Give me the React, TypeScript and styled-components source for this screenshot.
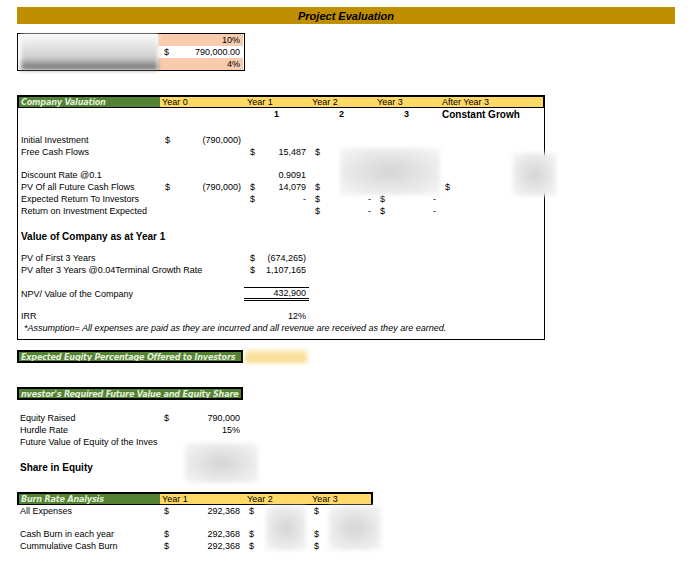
import React from 'react';
import styled, { createGlobalStyle } from 'styled-components';

const Global = createGlobalStyle`
  body { margin: 0; background: #fff; font-family: "Liberation Sans", Arial, sans-serif; font-size: 9px; color: #000; }
`;

const Page = styled.div`
  width: 691px;
  height: 562px;
  padding: 7px 16px 0 17px;
  box-sizing: border-box;
  display: flex;
  flex-direction: column;
`;

const TitleBar = styled.div`
  height: 17px;
  background: #bf8f00;
  display: flex;
  align-items: center;
  justify-content: center;
  font-weight: bold;
  font-style: italic;
  font-size: 11px;
`;

const Gap = styled.div<{ $h: number }>`
  height: ${p => p.$h}px;
  flex-shrink: 0;
`;

const COLS = '141px 85px 65px 65px 65px 107px';

const Row = styled.div<{ $h?: number }>`
  display: grid;
  grid-template-columns: ${COLS};
  height: ${p => p.$h ?? 12}px;
  align-items: center;
  white-space: nowrap;
`;

const Cell = styled.div<{ $align?: string; $bold?: boolean; $bg?: string }>`
  display: flex;
  justify-content: ${p => p.$align ?? 'flex-start'};
  align-items: center;
  height: 100%;
  padding: 0 3px;
  font-weight: ${p => (p.$bold ? 'bold' : 'normal')};
  background: ${p => p.$bg ?? 'transparent'};
  overflow: visible;
  box-sizing: border-box;
`;

const Money = styled.div<{ $lines?: boolean }>`
  display: flex;
  justify-content: space-between;
  align-items: center;
  height: 100%;
  padding: 0 3px 0 6px;
  box-sizing: border-box;
  border-top: ${p => (p.$lines ? '1px solid #000' : 'none')};
  border-bottom: ${p => (p.$lines ? '3px double #000' : 'none')};
`;

const Box = styled.div<{ $w: number }>`
  width: ${p => p.$w}px;
  border: 1px solid #000;
  box-sizing: border-box;
`;

const InputBox = styled.div`
  width: 226px;
  border: 1px solid #000;
  display: grid;
  grid-template-columns: 140px 85px;
`;

const Blur = styled.div<{ $w: number; $h: number; $c?: string }>`
  width: ${p => p.$w}px;
  height: ${p => p.$h}px;
  background: ${p => p.$c ?? 'radial-gradient(ellipse at center, #d4d4d4 0%, #e8e8e8 55%, #f6f6f6 100%)'};
  filter: blur(2px);
`;

const Header = styled.div<{ $cols: string; $w: number }>`
  display: grid;
  grid-template-columns: ${p => p.$cols};
  width: ${p => p.$w}px;
  height: 13px;
  border: 2px solid #000;
  box-sizing: border-box;
  align-items: center;
`;

const GreenLabel = styled.div`
  background: #548235;
  color: #e2efda;
  font-family: "DejaVu Sans Condensed", "Liberation Sans Narrow", "Liberation Sans", sans-serif;
  font-weight: bold;
  font-style: italic;
  font-size: 9px;
  letter-spacing: -0.2px;
  height: 100%;
  display: flex;
  align-items: center;
  padding-left: 2px;
  overflow: hidden;
  white-space: nowrap;
`;

const YellowCell = styled.div`
  background: #ffd966;
  height: 100%;
  display: flex;
  align-items: center;
  padding-left: 2px;
`;

const Line = styled.div`
  display: flex;
  align-items: center;
  gap: 2px;
`;

const Italic = styled.div`
  font-style: italic;
  padding-left: 6px;
  height: 12px;
  line-height: 12px;
  white-space: nowrap;
`;

const Overlay = styled.div<{ $x: number; $y: number }>`
  position: absolute;
  left: ${p => p.$x}px;
  top: ${p => p.$y}px;
`;

const Rel = styled.div`
  position: relative;
`;

const M = ({ v, lines }: { v: string; lines?: boolean }) => (
  <Money $lines={lines}><span>$</span><span>{v}</span></Money>
);

export default function App() {
  return (
    <Page>
      <Global />
      <TitleBar>Project Evaluation</TitleBar>
      <Gap $h={9} />
      <InputBox>
        <Blur $w={137} $h={36} $c="linear-gradient(180deg,#fafafa 0%,#d0d0d0 65%,#666 100%)" style={{ marginLeft: 3 }} />
        <div>
          <Cell $align="flex-end" $bg="#f8cbad" style={{ height: 12 }}>10%</Cell>
          <Money style={{ height: 12 }}><span>$</span><span>790,000.00</span></Money>
          <Cell $align="flex-end" $bg="#f8cbad" style={{ height: 12 }}>4%</Cell>
        </div>
      </InputBox>
      <Gap $h={24} />
      <Rel>
        <Box $w={528}>
          <Header $cols="141px 85px 65px 65px 65px 1fr" $w={528} style={{ marginLeft: -1, marginTop: -1 }}>
            <GreenLabel>Company Valuation</GreenLabel>
            <YellowCell>Year 0</YellowCell>
            <YellowCell>Year 1</YellowCell>
            <YellowCell>Year 2</YellowCell>
            <YellowCell>Year 3</YellowCell>
            <YellowCell>After Year 3</YellowCell>
          </Header>
          <Row>
            <Cell /><Cell /><Cell $align="center" $bold>1</Cell><Cell $align="center" $bold>2</Cell>
            <Cell $align="center" $bold>3</Cell><Cell $bold style={{ fontSize: 10 }}>Constant Growh</Cell>
          </Row>
          <Gap $h={14} />
          <Row><Cell>Initial Investment</Cell><M v="(790,000)" /></Row>
          <Row><Cell>Free Cash Flows</Cell><Cell /><M v="15,487" /><Money><span>$</span></Money></Row>
          <Gap $h={11} />
          <Row><Cell>Discount Rate @0.1</Cell><Cell /><Cell $align="flex-end">0.9091</Cell></Row>
          <Row><Cell>PV Of all Future Cash Flows</Cell><M v="(790,000)" /><M v="14,079" /><Money><span>$</span></Money><Cell /><Money><span>$</span></Money></Row>
          <Row><Cell>Expected Return To Investors</Cell><Cell /><M v="-" /><M v="-" /><M v="-" /></Row>
          <Row><Cell>Return on Investment Expected</Cell><Cell /><Cell /><M v="-" /><M v="-" /></Row>
          <Gap $h={12} />
          <Row $h={14}><Cell $bold style={{ fontSize: 10 }}>Value of Company as at Year 1</Cell></Row>
          <Gap $h={9} />
          <Row><Cell>PV of First 3 Years</Cell><Cell /><M v="(674,265)" /></Row>
          <Row><Cell>PV after 3 Years @0.04Terminal Growth Rate</Cell><Cell /><M v="1,107,165" /></Row>
          <Gap $h={11} />
          <Row $h={14}><Cell>NPV/ Value of the Company</Cell><Cell /><Money $lines><span></span><span>432,900</span></Money></Row>
          <Gap $h={9} />
          <Row><Cell>IRR</Cell><Cell /><Cell $align="flex-end">12%</Cell></Row>
          <Italic>*Assumption= All expenses are paid as they are incurred and all revenue are received as they are earned.</Italic>
          <Gap $h={5} />
        </Box>
        <Overlay $x={323} $y={53}><Blur $w={100} $h={47} /></Overlay>
        <Overlay $x={496} $y={58}><Blur $w={43} $h={43} /></Overlay>
      </Rel>
      <Gap $h={10} />
      <Line>
        <Header $cols="1fr" $w={226}><GreenLabel>Expected Euqity Percentage Offered to Investors</GreenLabel></Header>
        <Blur $w={62} $h={13} $c="linear-gradient(180deg,#fbe9b0,#f6d98a)" />
      </Line>
      <Gap $h={24} />
      <Header $cols="1fr" $w={226}><GreenLabel>nvestor's Required Future Value and Equity Share</GreenLabel></Header>
      <Gap $h={12} />
      <Rel>
        <Row><Cell>Equity Raised</Cell><M v="790,000" /></Row>
        <Row><Cell>Hurdle Rate</Cell><Cell $align="flex-end">15%</Cell></Row>
        <Row><Cell>Future Value of Equity of the Inves</Cell></Row>
        <Gap $h={12} />
        <Row $h={14}><Cell $bold style={{ fontSize: 10 }}>Share in Equity</Cell></Row>
        <Overlay $x={168} $y={31}><Blur $w={73} $h={40} /></Overlay>
      </Rel>
      <Gap $h={18} />
      <Header $cols="141px 85px 65px 1fr" $w={356}>
        <GreenLabel>Burn Rate Analysis</GreenLabel>
        <YellowCell>Year 1</YellowCell>
        <YellowCell>Year 2</YellowCell>
        <YellowCell>Year 3</YellowCell>
      </Header>
      <Rel>
        <Row><Cell>All Expenses</Cell><M v="292,368" /><Money><span>$</span></Money><Money><span>$</span><span>---,---</span></Money></Row>
        <Gap $h={11} />
        <Row><Cell>Cash Burn in each year</Cell><M v="292,368" /><Money><span>$</span></Money><Money><span>$</span></Money></Row>
        <Row><Cell>Cummulative Cash Burn</Cell><M v="292,368" /><Money><span>$</span></Money><Money><span>$</span></Money></Row>
        <Overlay $x={249} $y={1}><Blur $w={40} $h={44} /></Overlay>
        <Overlay $x={312} $y={1}><Blur $w={52} $h={44} /></Overlay>
      </Rel>
    </Page>
  );
}
